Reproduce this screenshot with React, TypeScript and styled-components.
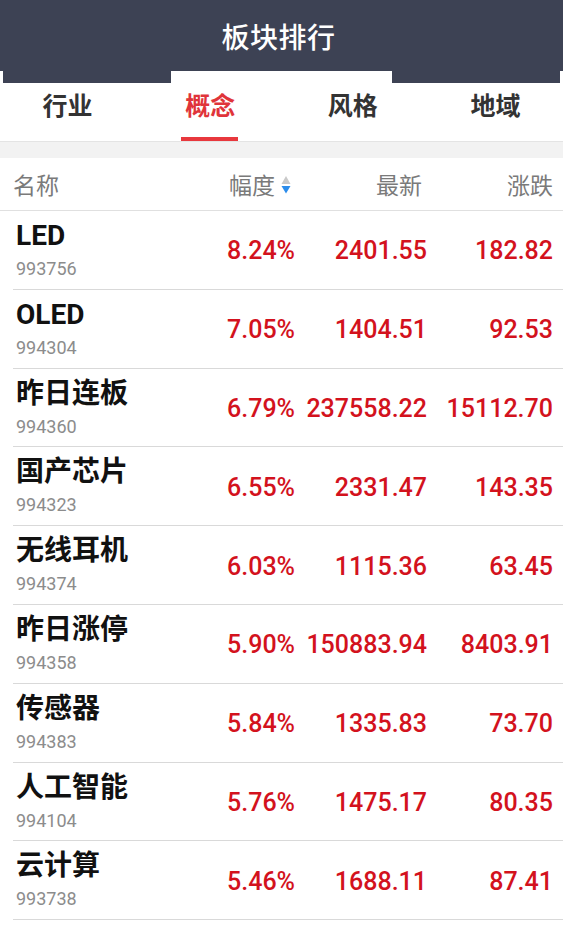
import React from "react";
import styled, { createGlobalStyle } from "styled-components";

const GlobalStyle = createGlobalStyle`
  html, body {
    margin: 0;
    padding: 0;
    background: #ffffff;
  }
  body {
    font-family: Roboto, "Noto Sans CJK SC", "Noto Sans", sans-serif;
    -webkit-font-smoothing: antialiased;
  }
  * { box-sizing: border-box; }
`;

const DARK = "#3d4254";
const RED = "#d3121d";

const Page = styled.div`
  width: 563px;
  min-height: 925px;
  background: #fff;
  overflow: hidden;
`;

const TopBar = styled.header`
  height: 71px;
  background: ${DARK};
  display: flex;
  align-items: center;
  justify-content: center;
`;

const Title = styled.h1`
  margin: 0 6px 0 0;
  color: #ffffff;
  font-family: "Noto Sans CJK SC", sans-serif;
  font-size: 28px;
  font-weight: 500;
  letter-spacing: 0.5px;
`;

const Notch = styled.div`
  height: 12px;
  display: flex;
  padding: 0 3px;
`;

const NotchPart = styled.div<{ $dark: boolean; $w: number }>`
  width: ${(p) => p.$w}px;
  background: ${(p) => (p.$dark ? DARK : "#ffffff")};
`;

const Tabs = styled.nav`
  display: grid;
  grid-template-columns: repeat(4, 142.7px);
  justify-content: center;
  height: 59px;
  border-bottom: 1px solid #e4e4e4;
`;

const Tab = styled.div<{ $active: boolean }>`
  display: flex;
  flex-direction: column;
  align-items: center;
  padding-top: 6px;
  color: ${(p) => (p.$active ? "#e0343a" : "#333333")};
`;

const TabLabel = styled.span`
  font-family: "Noto Sans CJK SC", sans-serif;
  font-size: 25px;
  font-weight: 700;
  line-height: 30px;
`;

const Indicator = styled.span<{ $active: boolean }>`
  margin-top: 18px;
  width: 57px;
  height: 4px;
  background: ${(p) => (p.$active ? "#e8383d" : "transparent")};
  margin-left: -1px;
`;

const Band = styled.div`
  height: 16px;
  background: #f2f2f2;
`;

const HeaderRow = styled.div`
  display: grid;
  grid-template-columns: 1fr 120px 132px 126px;
  align-items: center;
  height: 53px;
  padding: 0 10px 0 13px;
  border-bottom: 1px solid #e0e0e0;
`;

const HeadCell = styled.div<{ $align?: "left" | "right"; $pr?: number }>`
  display: flex;
  align-items: center;
  justify-content: ${(p) => (p.$align === "left" ? "flex-start" : "flex-end")};
  padding-right: ${(p) => p.$pr ?? 0}px;
  font-family: "Noto Sans CJK SC", sans-serif;
  font-size: 23px;
  color: #7a7a7a;
  line-height: 30px;
`;

const SortIcon = styled.svg`
  margin-left: 6px;
  margin-top: 2px;
`;

const Row = styled.div`
  display: grid;
  grid-template-columns: 1fr 120px 132px 126px;
  align-items: center;
  height: 77.8px;
  padding: 0 10px 0 16px;
`;

const RowLine = styled.div`
  height: 1px;
  background: #d9d9d9;
  margin-left: 13px;
`;

const NameCell = styled.div`
  display: flex;
  flex-direction: column;
  align-self: start;
  padding-top: 9px;
`;

const Name = styled.span`
  font-family: Roboto, "Noto Sans CJK SC", sans-serif;
  font-size: 28px;
  font-weight: 700;
  color: #111111;
  line-height: 32px;
`;

const Code = styled.span`
  font-family: Roboto, sans-serif;
  font-size: 18px;
  color: #8c8c8c;
  line-height: 22px;
  margin-top: 6px;
`;

const Num = styled.div`
  text-align: right;
  font-family: Roboto, sans-serif;
  font-size: 25px;
  font-weight: 500;
  color: ${RED};
  line-height: 30px;
  padding-top: 3px;
  white-space: nowrap;
`;

type Item = { name: string; code: string; pct: string; last: string; chg: string };

const data: Item[] = [
  { name: "LED", code: "993756", pct: "8.24%", last: "2401.55", chg: "182.82" },
  { name: "OLED", code: "994304", pct: "7.05%", last: "1404.51", chg: "92.53" },
  { name: "昨日连板", code: "994360", pct: "6.79%", last: "237558.22", chg: "15112.70" },
  { name: "国产芯片", code: "994323", pct: "6.55%", last: "2331.47", chg: "143.35" },
  { name: "无线耳机", code: "994374", pct: "6.03%", last: "1115.36", chg: "63.45" },
  { name: "昨日涨停", code: "994358", pct: "5.90%", last: "150883.94", chg: "8403.91" },
  { name: "传感器", code: "994383", pct: "5.84%", last: "1335.83", chg: "73.70" },
  { name: "人工智能", code: "994104", pct: "5.76%", last: "1475.17", chg: "80.35" },
  { name: "云计算", code: "993738", pct: "5.46%", last: "1688.11", chg: "87.41" },
];

const tabs = ["行业", "概念", "风格", "地域"];

export default function App() {
  return (
    <Page>
      <GlobalStyle />
      <TopBar>
        <Title>板块排行</Title>
      </TopBar>
      <Notch>
        <NotchPart $dark $w={168} />
        <NotchPart $dark={false} $w={221} />
        <NotchPart $dark $w={168} />
      </Notch>
      <Tabs>
        {tabs.map((t, i) => (
          <Tab key={t} $active={i === 1}>
            <TabLabel>{t}</TabLabel>
            <Indicator $active={i === 1} />
          </Tab>
        ))}
      </Tabs>
      <Band />
      <HeaderRow>
        <HeadCell $align="left">名称</HeadCell>
        <HeadCell $pr={4}>
          幅度
          <SortIcon width="10" height="18" viewBox="0 0 10 18">
            <polygon points="5,0 9.5,8 0.5,8" fill="#c9c9c9" />
            <polygon points="0.5,10 9.5,10 5,17.5" fill="#2b8ceb" />
          </SortIcon>
        </HeadCell>
        <HeadCell $pr={5}>最新</HeadCell>
        <HeadCell>涨跌</HeadCell>
      </HeaderRow>
      {data.map((d) => (
        <React.Fragment key={d.code}>
          <Row>
            <NameCell>
              <Name>{d.name}</Name>
              <Code>{d.code}</Code>
            </NameCell>
            <Num>{d.pct}</Num>
            <Num>{d.last}</Num>
            <Num>{d.chg}</Num>
          </Row>
          <RowLine />
        </React.Fragment>
      ))}
    </Page>
  );
}
